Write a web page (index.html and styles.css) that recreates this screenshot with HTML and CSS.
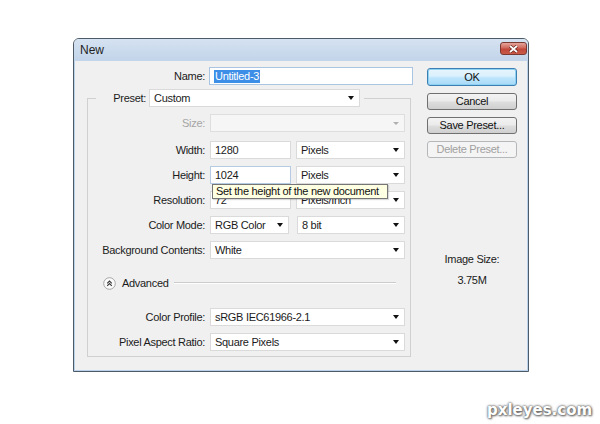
FILE: index.html
```html
<!DOCTYPE html>
<html>
<head>
<meta charset="utf-8">
<link rel="stylesheet" href="styles.css">
</head>
<body>
<div class="window">
  <div class="titlebar">
    <span class="title">New</span>
    <span class="close"><svg width="11" height="8" viewBox="0 0 11 8"><path d="M2 1 L9 7 M9 1 L2 7" stroke="#5a1a14" stroke-width="3"/><path d="M2 1 L9 7 M9 1 L2 7" stroke="#fff" stroke-width="1.8"/></svg></span>
  </div>
  <div class="body">
    <div class="main">
      <div class="name-row">
        <span class="name-lbl">Name:</span>
        <div class="field name-field"><span class="selected">Untitled-3</span></div>
      </div>
      <fieldset class="group">
        <legend class="preset">
          <span class="preset-lbl">Preset:</span>
          <div class="field dd preset-dd">Custom</div>
        </legend>
        <div class="row first">
          <span class="lbl disabled">Size:</span>
          <div class="field dd full disabled-field"></div>
        </div>
        <div class="row width-row">
          <span class="lbl">Width:</span>
          <div class="field num">1280</div>
          <div class="field dd unit">Pixels</div>
        </div>
        <div class="row">
          <span class="lbl">Height:</span>
          <div class="field num hover">1024<div class="tooltip">Set the height of the new document</div></div>
          <div class="field dd unit">Pixels</div>
        </div>
        <div class="row">
          <span class="lbl">Resolution:</span>
          <div class="field num">72</div>
          <div class="field dd unit">Pixels/Inch</div>
        </div>
        <div class="row">
          <span class="lbl">Color Mode:</span>
          <div class="field dd mode">RGB Color</div>
          <div class="field dd bits">8 bit</div>
        </div>
        <div class="row">
          <span class="lbl">Background Contents:</span>
          <div class="field dd full">White</div>
        </div>
        <div class="adv">
          <svg class="adv-icon" width="13" height="13" viewBox="0 0 13 13"><circle cx="6.5" cy="6.5" r="5.8" fill="#fbfbfb" stroke="#a6a6a6"/><path d="M4.2 6.3 L6.5 4.1 L8.8 6.3 M4.2 8.8 L6.5 6.6 L8.8 8.8" fill="none" stroke="#333" stroke-width="1.1"/></svg>
          <span class="adv-text">Advanced</span>
          <span class="adv-line"></span>
        </div>
        <div class="row profile-row">
          <span class="lbl">Color Profile:</span>
          <div class="field dd full">sRGB IEC61966-2.1</div>
        </div>
        <div class="row">
          <span class="lbl">Pixel Aspect Ratio:</span>
          <div class="field dd full">Square Pixels</div>
        </div>
      </fieldset>
    </div>
    <div class="side">
      <div class="btn ok">OK</div>
      <div class="btn">Cancel</div>
      <div class="btn">Save Preset...</div>
      <div class="btn btn-disabled">Delete Preset...</div>
      <div class="imgsize">
        <div>Image Size:</div>
        <div class="val">3.75M</div>
      </div>
    </div>
  </div>
</div>
<div class="watermark">pxleyes.com</div>
</body>
</html>
```

FILE: styles.css
```css
* { box-sizing: border-box; }

body {
  margin: 0;
  width: 600px;
  height: 424px;
  position: relative;
  overflow: hidden;
  background: #ffffff;
  font-family: "Liberation Sans", Arial, sans-serif;
  font-size: 11px;
  letter-spacing: -0.3px;
  color: #1b1b1b;
}

.window {
  margin: 38px 0 0 73px;
  width: 456px;
  height: 334px;
  border: 1px solid #4d5a67;
  border-radius: 6px 6px 0 0;
  background: #f0f0f0;
  display: flex;
  flex-direction: column;
  overflow: hidden;
}

.titlebar {
  height: 22px;
  flex: none;
  background: linear-gradient(#d5e2f1, #c2d4ea);
  display: flex;
  align-items: flex-start;
  padding-left: 6px;
}

.title {
  font-size: 12px;
  letter-spacing: 0;
  line-height: 22px;
  color: #1e1e1e;
}

.close {
  margin-left: auto;
  margin-top: 3px;
  margin-right: 1px;
  width: 27px;
  height: 13px;
  border: 1px solid #7a3a33;
  border-radius: 3px;
  background: linear-gradient(#e6a59b, #d0685b 45%, #c0473a 55%, #c95a48);
  display: flex;
  align-items: center;
  justify-content: center;
}

.body {
  flex: 1;
  display: flex;
  padding-top: 6px;
  border: 1px solid #b9d1ea;
  border-top: 0;
}

.main { width: 338px; flex: none; }

.name-row {
  display: flex;
  align-items: center;
  height: 18px;
}

.name-lbl {
  width: 130px;
  text-align: right;
  margin-right: 4px;
}

.field {
  height: 18px;
  background: #ffffff;
  border: 1px solid #dadada;
  display: flex;
  align-items: center;
  padding: 0 5px 0 4px;
  position: relative;
  white-space: nowrap;
  flex: none;
}

.name-field { width: 204px; border-color: #a9c5e2; }

.selected {
  background: #3d8ee6;
  color: #ffffff;
  padding: 0 1px;
  line-height: 13px;
}

.dd::after {
  content: "";
  margin-left: auto;
  border-left: 3px solid transparent;
  border-right: 3px solid transparent;
  border-top: 4px solid #111111;
}

.group {
  margin: 4px 0 0 12px;
  width: 324px;
  min-width: 0;
  padding: 0 5px 5px 0;
  border: 1px solid #d0d0d0;
}

.preset {
  margin-left: 8px;
  padding: 0 4px 0 0;
  display: flex;
  align-items: center;
  height: 18px;
}

.preset-lbl {
  width: 50px;
  text-align: right;
  margin-right: 3px;
}

.preset-dd { width: 211px; }

.row {
  display: flex;
  align-items: center;
  height: 18px;
  margin-top: 7px;
}

.width-row { margin-top: 9px; }

.lbl {
  width: 117px;
  flex: none;
  text-align: right;
  margin-right: 5px;
}

.disabled { color: #a5a5a5; }

.full { width: 195px; }

.disabled-field {
  background: #f6f6f6;
  border-color: #dedede;
}

.disabled-field::after {
  border-top-color: #b0b0b0;
  border-top-width: 3px;
}

.num { width: 81px; }
.unit { width: 109px; margin-left: 5px; }
.mode { width: 79px; }
.bits { width: 108px; margin-left: 8px; }

.hover { border-color: #b4cbe3; }

.tooltip {
  position: absolute;
  left: 1px;
  top: 17px;
  width: 176px;
  height: 15px;
  padding: 0 3px;
  line-height: 13px;
  background: #ffffe1;
  border: 1px solid #767676;
  color: #111111;
  z-index: 5;
  box-shadow: 1px 1px 1px rgba(0, 0, 0, 0.15);
}

.adv {
  display: flex;
  align-items: center;
  height: 18px;
  margin-top: 15px;
  padding-left: 15px;
}

.adv-icon { flex: none; }

.adv-text { margin-left: 6px; }

.adv-line {
  flex: 1;
  height: 2px;
  margin: 0 9px 0 5px;
  border-top: 1px solid #cbcbcb;
  border-bottom: 1px solid #ffffff;
}

.profile-row { margin-top: 16px; }

.side {
  margin-left: 14px;
  width: 90px;
  flex: none;
  display: flex;
  flex-direction: column;
}

.btn {
  height: 17px;
  margin-top: 7px;
  border: 1px solid #707070;
  border-radius: 3px;
  background: linear-gradient(#f3f3f3, #ebebeb 45%, #dddddd 55%, #cfcfcf);
  text-align: center;
  line-height: 15px;
  color: #111111;
}

.btn.ok {
  margin-top: 1px;
  height: 18px;
  line-height: 16px;
  border-color: #3c7fb1;
  background: linear-gradient(#e8f5fc, #d9f0fc 45%, #bee6fd 55%, #a7d9f5);
  box-shadow: inset 0 0 0 1px #8fd0f5;
}

.btn-disabled {
  border-color: #b5b8ba;
  background: #f4f4f4;
  color: #a0a0a0;
}

.imgsize {
  margin-top: 95px;
  text-align: center;
  line-height: 13px;
}

.imgsize .val { margin-top: 8px; }

.watermark {
  position: absolute;
  left: 487px;
  top: 401px;
  font-family: "DejaVu Sans", sans-serif;
  font-weight: bold;
  font-size: 15px;
  letter-spacing: 0;
  line-height: 18px;
  color: #ffffff;
  text-shadow: 0 0 2px #5a5a5a, 0 0 3px #7a7a7a, 1px 1px 2px #777777;
}
```
